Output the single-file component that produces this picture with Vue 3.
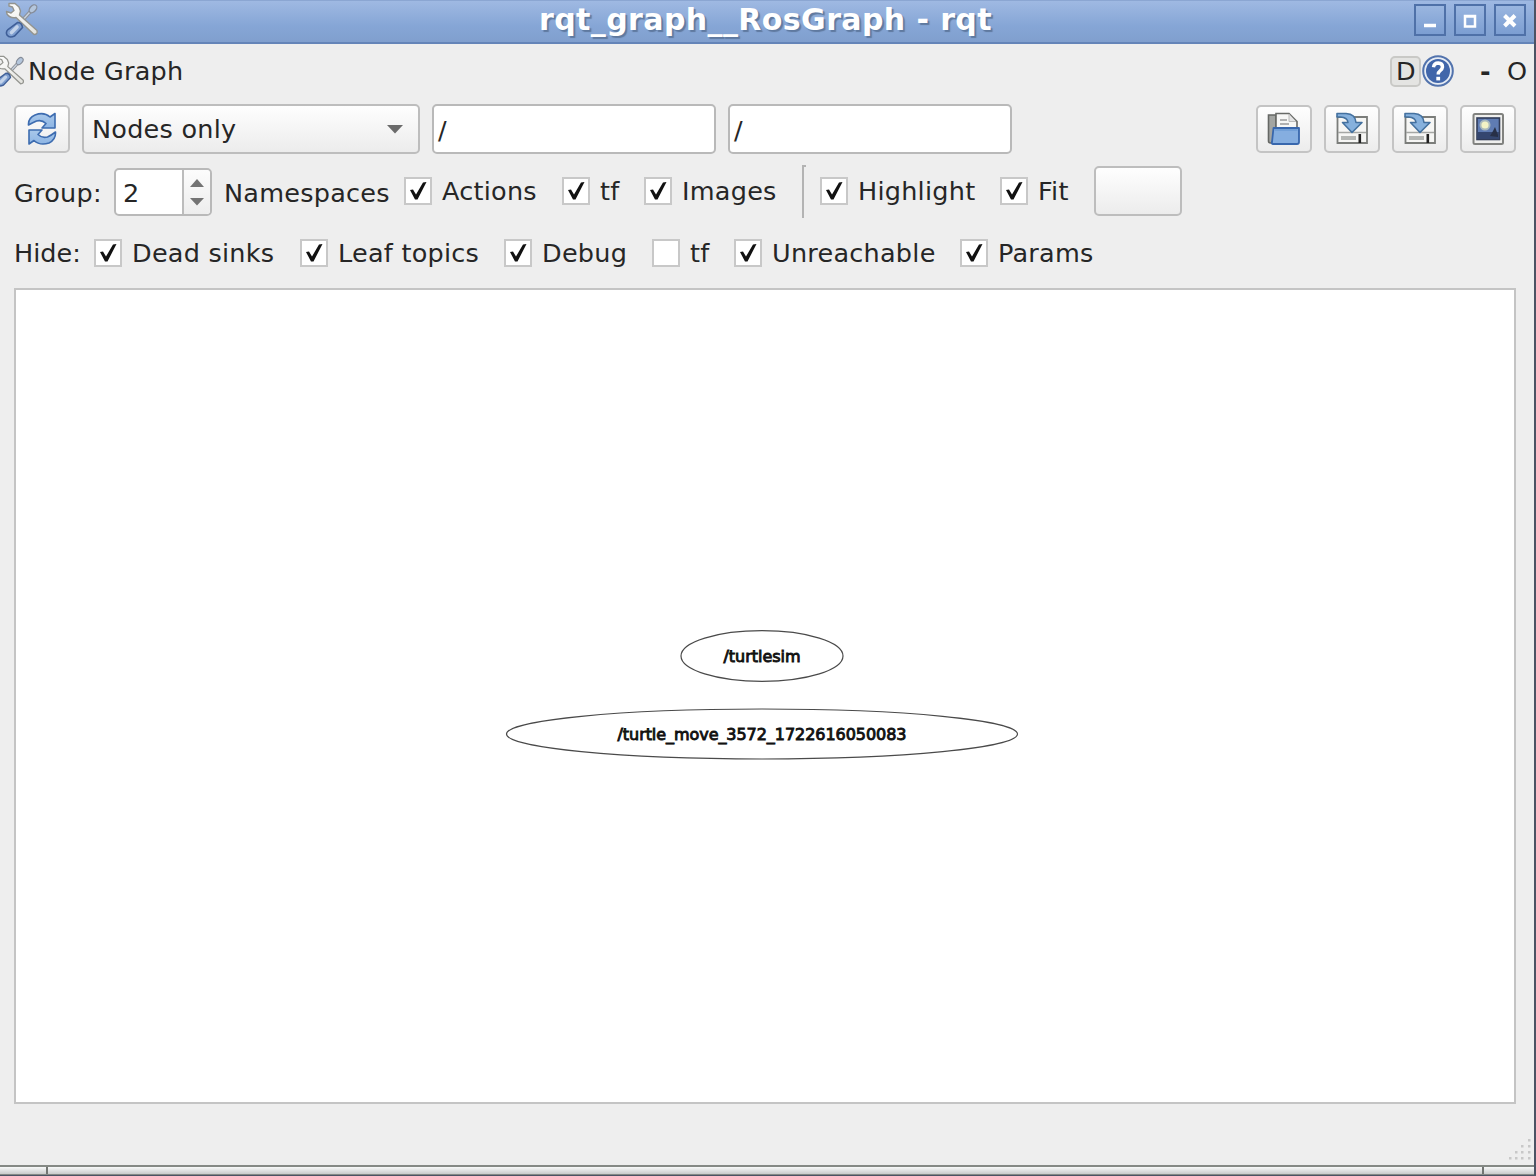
<script setup>
const groupChecks = [
  { label: 'Actions', on: true, width: 158 },
  { label: 'tf', on: true, width: 82 },
  { label: 'Images', on: true, width: 158 },
]
const viewChecks = [
  { label: 'Highlight', on: true, width: 180 },
  { label: 'Fit', on: true, width: 94 },
]
const hideChecks = [
  { label: 'Dead sinks', on: true, width: 206 },
  { label: 'Leaf topics', on: true, width: 204 },
  { label: 'Debug', on: true, width: 148 },
  { label: 'tf', on: false, width: 82 },
  { label: 'Unreachable', on: true, width: 226 },
  { label: 'Params', on: true, width: 150 },
]
const nodes = [
  { name: '/turtlesim', cx: 746, cy: 366, rx: 81, ry: 25.3, len: 77 },
  { name: '/turtle_move_3572_1722616050083', cx: 746, cy: 444, rx: 255.5, ry: 25, len: 289 },
]
const gripDots = [
  [24, 3], [17, 9], [24, 9], [11, 15], [17, 15], [24, 15], [5, 21], [11, 21], [17, 21], [24, 21],
]
</script>

<template>
  <div class="desktop">
    <svg class="defs" width="0" height="0">
      <defs>
        <linearGradient id="steel" x1="0" y1="0" x2="1" y2="1">
          <stop offset="0" stop-color="#ffffff" />
          <stop offset="1" stop-color="#e2e2dd" />
        </linearGradient>
        <linearGradient id="blue" x1="0" y1="0" x2="0" y2="1">
          <stop offset="0" stop-color="#a9c8ea" />
          <stop offset="1" stop-color="#8db5e4" />
        </linearGradient>
        <symbol id="tools" viewBox="0 0 34 36">
          <path d="M25.500 9.500 L15 21" stroke="#8d9199" stroke-width="3.600" />
          <path d="M25.500 9.500 L15 21" stroke="#c9d3df" stroke-width="1.400" />
          <ellipse cx="28" cy="6.800" rx="4.600" ry="3" transform="rotate(-48 28 6.800)" fill="#b4c6dc" stroke="#858c98" stroke-width="1.300" />
          <path d="M4 1.500 L10 1.500 L14 5 L15.500 9 L14.500 13 L32 28.500 Q33 32.500 29 32.500 L11 15.500 Q5 16.500 2 12 L1.500 9.500 L6 11 L9 8.500 L7.500 5 L4 4 Z" fill="url(#steel)" stroke="#93948f" stroke-width="1.400" stroke-linejoin="round" />
          <path d="M12.500 20.500 Q17 20.500 17.500 25.500 L9.500 34 Q4.500 36.500 2 33 Q0.500 30 3 27.500 Z" fill="#7f9fd0" stroke="#3f5f98" stroke-width="1.600" />
          <path d="M12 25 L6.500 30.500" stroke="#c3d3ea" stroke-width="3.600" stroke-linecap="round" />
        </symbol>
        <symbol id="check" viewBox="0 0 24 24">
          <path d="M4 11 L7 10.500 L10 15.500 L17 3.500 L20.500 3 L11.500 20.500 H9 Z" fill="#111" />
        </symbol>
        <symbol id="save" viewBox="0 0 34 34">
          <path d="M2.500 5 H32 V31 H2.500 Z" fill="#f6f6f4" stroke="#7b7d7a" stroke-width="1.800" />
          <path d="M3 20.500 H31" stroke="#a5a7a4" stroke-width="1.500" />
          <path d="M6 25 H21 M6 27 H21" stroke="#b4b6b3" stroke-width="1.800" />
          <rect x="23.500" y="22" width="2.600" height="9" fill="#222" />
          <path d="M2 1.500 H11 Q20.500 2 21 10.500 H27 L17 20.500 L7.500 10.500 H13 Q12.500 5.500 5.500 5 H2 Z" fill="#86b1dd" stroke="#44719f" stroke-width="1.600" stroke-linejoin="round" />
        </symbol>
      </defs>
    </svg>

    <div class="window">
      <header class="titlebar">
        <svg class="app-icon" width="34" height="36"><use href="#tools" /></svg>
        <h1 class="title">rqt_graph__RosGraph - rqt</h1>
        <div class="win-buttons">
          <span class="win-btn"><svg width="28" height="28"><path d="M8 19.500 H20" stroke="#fff" stroke-width="3.500" /></svg></span>
          <span class="win-btn"><svg width="28" height="28"><path d="M9 10 H19 V20.500 H9 Z M8 10.500 H20" fill="none" stroke="#fff" stroke-width="2.500" /></svg></span>
          <span class="win-btn"><svg width="28" height="28"><path d="M8.500 9.500 L19 20 M19 9.500 L8.500 20" stroke="#fff" stroke-width="4" /></svg></span>
        </div>
      </header>

      <div class="dock">
        <svg class="dock-icon" width="30" height="32"><use href="#tools" /></svg>
        <span class="dock-title">Node Graph</span>
        <span class="dock-d">D</span>
        <svg class="help" width="32" height="32" viewBox="0 0 32 32">
          <circle cx="16" cy="16" r="14.800" fill="#e7edf5" stroke="#5273ad" stroke-width="2" />
          <circle cx="16" cy="16" r="12" fill="#4166aa" />
          <path d="M11.500 12.200 Q12 8 16.300 8 Q20.600 8.200 20.500 12 Q20.300 14.300 18 15.800 Q16.200 17 16.200 19.500" fill="none" stroke="#fff" stroke-width="3.400" />
          <rect x="14.300" y="21.800" width="3.800" height="3.600" fill="#fff" />
        </svg>
        <span class="dock-min">-</span>
        <span class="dock-close">O</span>
      </div>

      <div class="toolbar">
        <button class="btn icon-btn">
          <svg width="32" height="34" viewBox="0 0 32 34">
            <path d="M2.500 13 Q2 6 9 3 Q18 -0.500 24 5 L29 1.500 V16 H16 L20 11.500 Q16 7.500 10.500 9 Q7 10.500 2.500 13 Z" fill="url(#blue)" stroke="#3d6cb0" stroke-width="1.600" stroke-linejoin="round" />
            <path d="M29.500 20 Q30 27.500 23 31 Q14 34 8 28.500 L3 32 V18 H16 L12 22.500 Q16 26.500 21.500 25 Q25 23.500 29.500 20 Z" fill="url(#blue)" stroke="#3d6cb0" stroke-width="1.600" stroke-linejoin="round" />
          </svg>
        </button>
        <div class="btn combo">
          <span>Nodes only</span>
          <svg width="18" height="10"><path d="M1 1 H17 L9 9.500 Z" fill="#6b6b6b" /></svg>
        </div>
        <div class="field">/</div>
        <div class="field second">/</div>
        <div class="file-buttons">
          <button class="btn icon-btn">
            <svg width="34" height="34" viewBox="0 0 34 34">
              <path d="M1.500 3 H9 V31 H3.500 Q1.500 31 1.500 29 Z" fill="#a3a5a2" stroke="#656764" stroke-width="1.600" />
              <path d="M9 1.500 H22 L30 9.500 V20 H9 Z" fill="#f7f7f6" stroke="#686a67" stroke-width="1.600" />
              <path d="M22 2 V9.500 H29" fill="#e4e4e4" stroke="#bbb" />
              <path d="M13 8 H20 M13 12 H22" stroke="#9a9a9a" stroke-width="1.500" />
              <path d="M6.500 16 H32 V30 Q32 32 30 32 H6 Q4.500 32 5 30 Z" fill="#85aee0" stroke="#3867ad" stroke-width="1.800" stroke-linejoin="round" />
              <path d="M8 18 H30.500" stroke="#6c9bd6" stroke-width="1.500" />
            </svg>
          </button>
          <button class="btn icon-btn"><svg width="34" height="34"><use href="#save" /></svg></button>
          <button class="btn icon-btn"><svg width="34" height="34"><use href="#save" /></svg></button>
          <button class="btn icon-btn">
            <svg width="34" height="34" viewBox="0 0 34 34">
              <rect x="2.500" y="2" width="29.500" height="30" rx="1.500" fill="#efefed" stroke="#81827f" stroke-width="2" />
              <rect x="6" y="6" width="22.500" height="21.500" fill="#5f7cb3" stroke="#303b58" stroke-width="1.600" />
              <path d="M6.500 20 H28 V27 H6.500 Z" fill="#34466f" />
              <circle cx="14" cy="13" r="5.500" fill="#a9b9bd" /><circle cx="14" cy="13" r="3.600" fill="#f2f2c5" />
              <path d="M19 24 L22 19 L24 15 L27 23 V25 Z" fill="#273047" />
            </svg>
          </button>
        </div>
      </div>

      <div class="group-row">
        <span class="group-label">Group:</span>
        <div class="spin">
          <span class="spin-value">2</span>
          <span class="spin-arrows">
            <svg width="16" height="28"><path d="M1 9 H15 L8 1 Z M1 20 H15 L8 27.500 Z" fill="#737373" /></svg>
          </span>
        </div>
        <span class="ns-label">Namespaces</span>
        <label v-for="c in groupChecks" :key="c.label" class="check" :style="{ width: c.width + 'px' }">
          <span class="box"><svg v-if="c.on" width="24" height="24"><use href="#check" /></svg></span>
          <span class="check-label">{{ c.label }}</span>
        </label>
        <span class="separator"></span>
        <label v-for="c in viewChecks" :key="c.label" class="check" :style="{ width: c.width + 'px' }">
          <span class="box"><svg v-if="c.on" width="24" height="24"><use href="#check" /></svg></span>
          <span class="check-label">{{ c.label }}</span>
        </label>
        <button class="btn blank-btn"></button>
      </div>

      <div class="hide-row">
        <span class="hide-label">Hide:</span>
        <label v-for="c in hideChecks" :key="c.label" class="check" :style="{ width: c.width + 'px' }">
          <span class="box"><svg v-if="c.on" width="24" height="24"><use href="#check" /></svg></span>
          <span class="check-label">{{ c.label }}</span>
        </label>
      </div>

      <main class="canvas">
        <svg width="1498" height="811">
          <g v-for="n in nodes" :key="n.name">
            <ellipse :cx="n.cx" :cy="n.cy" :rx="n.rx" :ry="n.ry" class="node" />
            <text :x="n.cx" :y="n.cy + 5.500" :textLength="n.len" class="node-name">{{ n.name }}</text>
          </g>
        </svg>
      </main>

      <footer class="status">
        <svg width="30" height="26">
          <rect v-for="(d, i) in gripDots" :key="i" :x="d[0]" :y="d[1]" width="2.500" height="2.500" fill="#c8c8c8" />
        </svg>
      </footer>
      <div class="frame-bottom"><span class="handle"></span><span class="handle"></span><span class="handle"></span></div>
    </div>
  </div>
</template>

<style>
body { margin: 0; overflow: hidden; }
</style>

<style scoped>
* { box-sizing: border-box; }
.desktop {
  width: 1536px;
  height: 1176px;
  background: #4c5364;
  font-family: "DejaVu Sans", sans-serif;
  font-size: 25.5px;
  letter-spacing: 0.25px;
  line-height: 30px;
  color: #262626;
  white-space: nowrap;
}
.defs { display: block; }
svg { display: block; flex: none; }
.window {
  display: flex;
  flex-direction: column;
  width: 1534px;
  height: 1175px;
  background: #eeeeee;
}
.titlebar {
  flex: none;
  display: flex;
  align-items: flex-start;
  height: 44px;
  background: linear-gradient(#9fb9e2, #86a6d6 60%, #809fce);
  border-top: 1px solid #8ba6d2;
  border-bottom: 2px solid #6484b8;
}
.app-icon { margin: 1px 0 0 5px; }
.title {
  margin: 0 0 0 500px;
  width: 480px;
  font-size: 30px;
  line-height: 37px;
  letter-spacing: 0.4px;
  font-weight: bold;
  color: #fff;
  text-shadow: 2px 2px 1px #5f799f;
}
.win-buttons { display: flex; gap: 8px; margin: 3px 0 0 395px; }
.win-btn {
  width: 32px;
  height: 32px;
  border: 2px solid #4f71a8;
  background: linear-gradient(#9ab6e0, #7c9ed2);
}
.dock { flex: none; display: flex; align-items: center; height: 54px; }
.dock-icon { margin-left: -5px; }
.dock-title { margin-left: 3px; width: 1362px; }
.dock-d {
  width: 31px;
  height: 31px;
  padding-left: 4px;
  border: 2px solid #c9c9c6;
  border-radius: 5px;
  background: #e4e4e2;
  line-height: 27px;
}
.help { margin-left: 1px; }
.dock-min { width: 13px; margin-left: 26px; font-weight: bold; }
.dock-close { margin-left: 14px; }
.toolbar { flex: none; display: flex; align-items: center; height: 62px; padding: 0 18px 0 14px; }
.btn {
  flex: none;
  border: 2px solid #bdbdbd;
  border-radius: 5px;
  background: linear-gradient(#fefefe, #ececec);
  padding: 0;
}
.icon-btn {
  display: flex;
  align-items: center;
  justify-content: center;
  width: 56px;
  height: 48px;
  border-color: #c4c4c4;
}
.combo {
  display: flex;
  align-items: center;
  justify-content: space-between;
  width: 338px;
  height: 50px;
  margin-left: 12px;
  padding: 0 14px 0 8px;
}
.field {
  width: 284px;
  height: 50px;
  margin-left: 12px;
  padding-left: 4px;
  border: 2px solid #b9b9b9;
  border-radius: 5px;
  background: #fff;
  line-height: 49px;
}
.file-buttons { display: flex; gap: 12px; margin-left: auto; }
.group-row { flex: none; display: flex; align-items: center; height: 62px; padding-left: 14px; }
.group-label { width: 100px; padding-top: 4px; }
.spin {
  display: flex;
  width: 98px;
  height: 48px;
  margin-top: 2px;
  border: 2px solid #b9b9b9;
  border-radius: 5px;
  background: #fff;
}
.spin-value { width: 66px; padding-left: 7px; line-height: 46px; }
.spin-arrows {
  flex: 1;
  display: flex;
  align-items: center;
  justify-content: center;
  border-left: 2px solid #bcbcbc;
  border-radius: 0 4px 4px 0;
  background: linear-gradient(#fcfcfc, #ededed);
}
.ns-label { width: 180px; margin-left: 12px; padding-top: 4px; }
.check { flex: none; display: flex; align-items: center; }
.box {
  flex: none;
  width: 28px;
  height: 28px;
  margin-top: -1px;
  border: 2px solid #c8c8c8;
  background: #fff;
}
.check-label { margin-left: 10px; }
.separator {
  width: 4px;
  height: 53px;
  margin-right: 14px;
  border-left: 2px solid #b3b3b3;
  border-top: 2px solid #b3b3b3;
}
.blank-btn { width: 88px; height: 50px; }
.hide-row { flex: none; display: flex; align-items: center; height: 62px; padding: 0 0 0 14px; }
.hide-label { width: 80px; letter-spacing: 0; }
.canvas {
  flex: none;
  width: 1502px;
  height: 816px;
  margin: 4px 0 0 14px;
  border: 2px solid #c4c4c4;
  background: #fff;
}
.node { fill: none; stroke: #4a4a4a; stroke-width: 1.2; }
.node-name {
  font-size: 16px;
  letter-spacing: 0;
  text-anchor: middle;
  fill: #111;
  stroke: #111;
  stroke-width: 0.9;
}
.status { flex: none; display: flex; align-items: flex-end; justify-content: flex-end; height: 61px; padding: 0 0 3px 0; }
.frame-bottom {
  flex: none;
  display: flex;
  height: 10px;
  border-top: 2px solid #858985;
  border-bottom: 1px solid #858985;
  background: linear-gradient(#f8f9f9, #c9cbcb);
}
.handle { border-right: 2px solid #727572; width: 48px; }
.handle:nth-child(2) { width: 1436px; }
.handle:nth-child(3) { border: 0; }
</style>
